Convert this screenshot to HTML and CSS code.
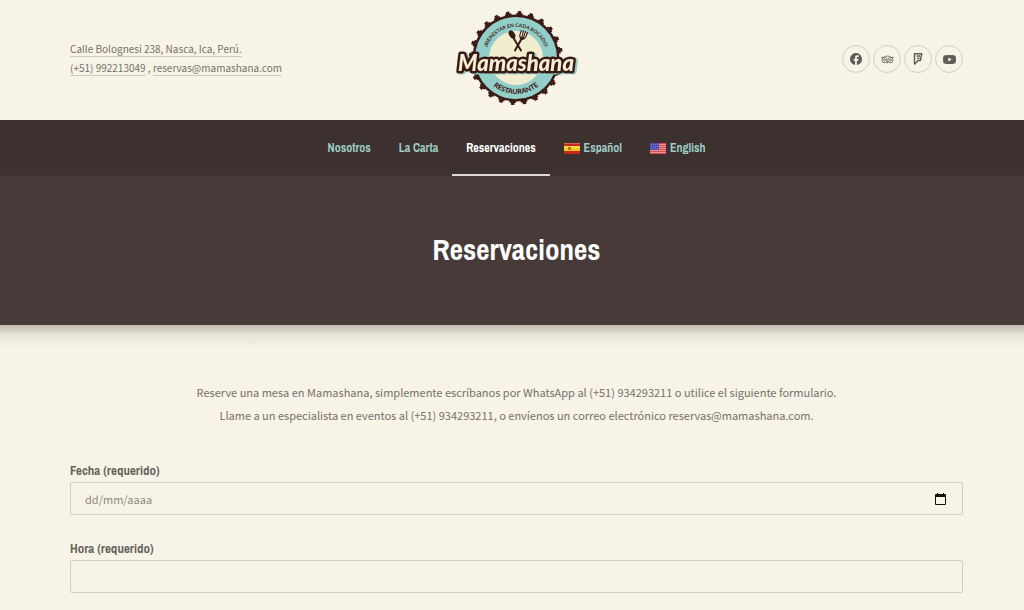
FILE: index.html
```html
<!DOCTYPE html>
<html lang="es">

<head>
  <meta charset="UTF-8">
  <meta name="viewport" content="width=device-width, initial-scale=1.0">
  <title>Reservaciones - Mamashana Restaurante</title>
  <link rel="stylesheet" href="styles.css">
</head>

<body>

  <header class="site-header">
    <address class="contact">
      <div><a href="#mapa">Calle Bolognesi 238, Nasca, Ica, Perú.</a></div>
      <div><a href="tel:+51992213049">(+51) 992213049</a> , <a href="mailto:reservas@mamashana.com">reservas@mamashana.com</a></div>
    </address>

    <a class="logo" href="#inicio" aria-label="Mamashana">
      <svg width="126" height="98" viewBox="12 10 126 98">
        <defs>
          <path id="arc-top" d="M43 59 A31 31 0 0 1 105 59"/>
          <path id="arc-bottom" d="M38 59 A36 36 0 0 0 110 59"/>
        </defs>
        <!-- bottle cap -->
        <circle cx="74" cy="59" r="43.500" fill="#3b1a16"/>
        <circle cx="74" cy="59" r="44" fill="none" stroke="#3b1a16" stroke-width="2" stroke-dasharray="6.500 5.019"/>
        <circle cx="74" cy="59" r="45.500" fill="none" stroke="#3b1a16" stroke-width="3" stroke-dasharray="3.500 8.412" stroke-dashoffset="-1.500"/>
        <circle cx="74" cy="59" r="41" fill="#93cfc8"/>
        <circle cx="74" cy="59" r="27" fill="#f1edcf"/>
        <text class="logo-small"><textPath href="#arc-top" startOffset="50%" text-anchor="middle">¡BIENESTAR EN CADA BOCADO!</textPath></text>
        <text class="logo-bottom"><textPath href="#arc-bottom" startOffset="50%" text-anchor="middle">RESTAURANTE</textPath></text>
        <!-- spoon and fork -->
        <g stroke="#3b1a16" fill="none" stroke-linecap="round">
          <path d="M71.500 39 L79 51.500" stroke-width="2"/>
          <ellipse cx="70" cy="35.500" rx="2.800" ry="4.500" transform="rotate(-32 70 35.500)" fill="#3b1a16" stroke="none"/>
          <path d="M80 39 L73 51.500" stroke-width="2"/>
          <path d="M79.300 31.500 L77.800 36 Q77.500 39.500 80 40 Q82.500 40.500 84 37.500 L85.500 33.500 M81.400 31.800 L80 38 M83.500 32.500 L81.500 38.500" stroke-width="1.100"/>
          <path d="M78 37.500 L83.500 39 L80 41z" fill="#3b1a16" stroke="none"/>
        </g>
        <text class="logo-name" x="74" y="72" text-anchor="middle">Mamashana</text>
      </svg>
    </a>

    <div class="social">
      <a href="#facebook" aria-label="Facebook">
        <svg width="12" height="12" viewBox="0 0 24 24"><path fill="currentColor" d="M24 12a12 12 0 1 0-13.900 11.900v-8.400H7.100V12h3V9.400c0-3 1.800-4.700 4.500-4.700 1.300 0 2.700.2 2.700.2v3h-1.500c-1.500 0-2 .9-2 1.900V12h3.400l-.5 3.500h-2.900v8.400A12 12 0 0 0 24 12z"/></svg>
      </a>
      <a href="#tripadvisor" aria-label="Tripadvisor">
        <svg width="13" height="9" viewBox="0 0 28 20">
          <g fill="none" stroke="currentColor">
            <path d="M1 5h5C10 1.500 18 1.500 22 5h5l-2 3M1 5l2 3" stroke-width="1.800"/>
            <circle cx="7.500" cy="11.500" r="5.800" stroke-width="1.800"/>
            <circle cx="20.500" cy="11.500" r="5.800" stroke-width="1.800"/>
            <circle cx="7.500" cy="11.500" r="2" stroke-width="1.800"/>
            <circle cx="20.500" cy="11.500" r="2" stroke-width="1.800"/>
          </g>
          <path fill="currentColor" d="M11.500 15.500h5L14 19z"/>
        </svg>
      </a>
      <a href="#foursquare" aria-label="Foursquare">
        <svg width="10" height="12" viewBox="0 0 20 24"><path fill="none" stroke="currentColor" stroke-width="2.800" stroke-linejoin="round" d="M3 1.500h14.500L14.800 15H10l-6.500 7.200H3zM14 6H7.500M13 10.500H8.500"/></svg>
      </a>
      <a href="#youtube" aria-label="YouTube">
        <svg width="13" height="9" viewBox="0 0 26 18"><path fill="currentColor" fill-rule="evenodd" d="M4 .4Q13-.4 22 .4q3 .3 3.500 3.200.7 5.400 0 10.800-.5 2.900-3.500 3.200-9 .8-18 0-3-.3-3.500-3.200-.7-5.400 0-10.800Q1 .7 4 .4zM10.500 5v8l7-4z"/></svg>
      </a>
    </div>
  </header>

  <nav class="main-nav">
    <a href="#nosotros">Nosotros</a>
    <a href="#carta">La Carta</a>
    <a href="#reservaciones" class="active">Reservaciones</a>
    <a href="#es">
      <svg class="flag" width="16" height="11" viewBox="0 0 16 11">
        <rect width="16" height="11" fill="#c8281e"/>
        <rect y="3" width="16" height="5" fill="#f5c518"/>
        <rect y="3" width="16" height="2" fill="#fbdc4a"/>
        <rect x="4" y="4" width="3" height="3" fill="#b5722a"/>
        <rect width="16" height="1" fill="#e4604a"/>
      </svg>
      Español
    </a>
    <a href="#en">
      <svg class="flag" width="16" height="11" viewBox="0 0 16 11">
        <rect width="16" height="11" fill="#dc4a4c"/>
        <path stroke="#ec9294" d="M0 1.500h16M0 3.500h16M0 5.500h16M0 7.500h16M0 9.500h16"/>
        <rect width="9" height="7" fill="#4a4fb0"/>
        <path stroke="#7479c8" stroke-dasharray="1 1" d="M1 1.500h7M1 3.500h7M1 5.500h7"/>
      </svg>
      English
    </a>
  </nav>

  <div class="page-title">
    <h1>Reservaciones</h1>
  </div>

  <main>
    <div class="intro">
      <p>Reserve una mesa en Mamashana, simplemente escríbanos por WhatsApp al (+51) 934293211 o utilice el siguiente formulario.</p>
      <p>Llame a un especialista en eventos al (+51) 934293211, o envíenos un correo electrónico reservas@mamashana.com.</p>
    </div>

    <form class="booking">
      <div class="field">
        <label for="fecha">Fecha (requerido)</label>
        <div class="input-box">
          <input type="text" id="fecha" name="fecha" placeholder="dd/mm/aaaa">
          <button type="button" class="picker" aria-label="Abrir calendario">
            <svg width="11" height="12" viewBox="0 0 11 12"><path fill="#111" fill-rule="evenodd" d="M2 0h1v1h5V0h1v1h1q1 0 1 1v9q0 1-1 1H1q-1 0-1-1V2q0-1 1-1h1zM1 4v7h9V4z"/></svg>
          </button>
        </div>
      </div>
      <div class="field">
        <label for="hora">Hora (requerido)</label>
        <div class="input-box">
          <input type="text" id="hora" name="hora">
        </div>
      </div>
    </form>
  </main>

</body>

</html>
```

FILE: styles.css
```css
* {
  box-sizing: border-box;
}

body {
  margin: 0;
  background-color: #f8f3e7;
  color: #74726a;
  font-family: "Noto Sans CJK SC", "Open Sans", sans-serif;
  font-size: 11px;
}

a {
  color: inherit;
  text-decoration: none;
}

.site-header {
  display: grid;
  grid-template-columns: 1fr auto 1fr;
  align-items: center;
  height: 120px;
  padding: 0 61px 4px 70px;
}

.contact {
  font-style: normal;
  font-size: 10px;
  line-height: 19px;
}

.contact a {
  display: inline-block;
  line-height: 15px;
  border-bottom: 1px solid #cfcabe;
}

.logo svg {
  display: block;
}

.logo-small,
.logo-bottom {
  font-family: Lato, sans-serif;
  font-weight: 700;
  fill: #3b1a16;
}

.logo-small {
  font-size: 5px;
}

.logo-bottom {
  font-size: 7px;
  font-weight: 900;
}

.logo-name {
  font-family: Lato, sans-serif;
  font-size: 22px;
  font-style: italic;
  font-weight: 900;
  fill: #f5efd3;
  stroke: #3b1a16;
  stroke-width: 5px;
  stroke-linejoin: round;
  paint-order: stroke;
  filter: drop-shadow(2px 1px 0 #93cfc8);
}

.social {
  display: flex;
  justify-content: flex-end;
  gap: 3px;
  padding-top: 2px;
}

.social a {
  display: flex;
  align-items: center;
  justify-content: center;
  width: 28px;
  height: 28px;
  border: 1px solid #d3cfc3;
  border-radius: 50%;
  color: #5d5c55;
}

.main-nav {
  display: flex;
  justify-content: center;
  height: 56px;
  padding-left: 9px;
  background-color: #3c312f;
  border-bottom: 1px solid #403534;
  font-family: "Liberation Sans Narrow", "Archivo Narrow", sans-serif;
  font-size: 12px;
  font-weight: 700;
  color: #9fcdc5;
}

.main-nav a {
  display: flex;
  align-items: center;
  gap: 4px;
  height: 56px;
  padding: 2px 14px 0;
  border-bottom: 2px solid transparent;
}

.main-nav .active {
  color: #fff;
  border-bottom-color: #ddd8d5;
}

.page-title {
  display: flex;
  align-items: center;
  justify-content: center;
  height: 149px;
  padding-left: 9px;
  background-color: #473b3a;
}

/* soft shade below the banner */
.page-title + main {
  background-image: linear-gradient(rgba(60, 55, 45, 0.3), rgba(60, 55, 45, 0.08) 10px, rgba(60, 55, 45, 0) 24px);
}

.page-title h1 {
  margin: 0 0 2px;
  color: #fff;
  font-family: "Liberation Sans Narrow", "Archivo Narrow", sans-serif;
  font-size: 29px;
  font-weight: 700;
}

main {
  padding: 56px 61px 16px 70px;
}

.intro {
  text-align: center;
  line-height: 23px;
}

.intro p {
  margin: 0;
}

.booking {
  display: grid;
  gap: 26px;
  margin-top: 36px;
}

.field label {
  display: block;
  margin-bottom: 3px;
  color: #66645d;
  font-family: "Liberation Sans Narrow", "Archivo Narrow", sans-serif;
  font-size: 13px;
  font-weight: 700;
  line-height: 16px;
}

.input-box {
  display: flex;
  align-items: center;
  height: 33px;
  padding: 0 16px 0 14px;
  border: 1px solid #d3cfc3;
  border-radius: 2px;
}

.input-box input {
  flex: 1;
  padding: 0;
  border: 0;
  outline: 0;
  background: none;
  color: inherit;
  font: inherit;
}

.input-box input::placeholder {
  color: #8d8a81;
}

.picker {
  display: flex;
  padding: 0;
  border: 0;
  background: none;
  cursor: pointer;
}
```
